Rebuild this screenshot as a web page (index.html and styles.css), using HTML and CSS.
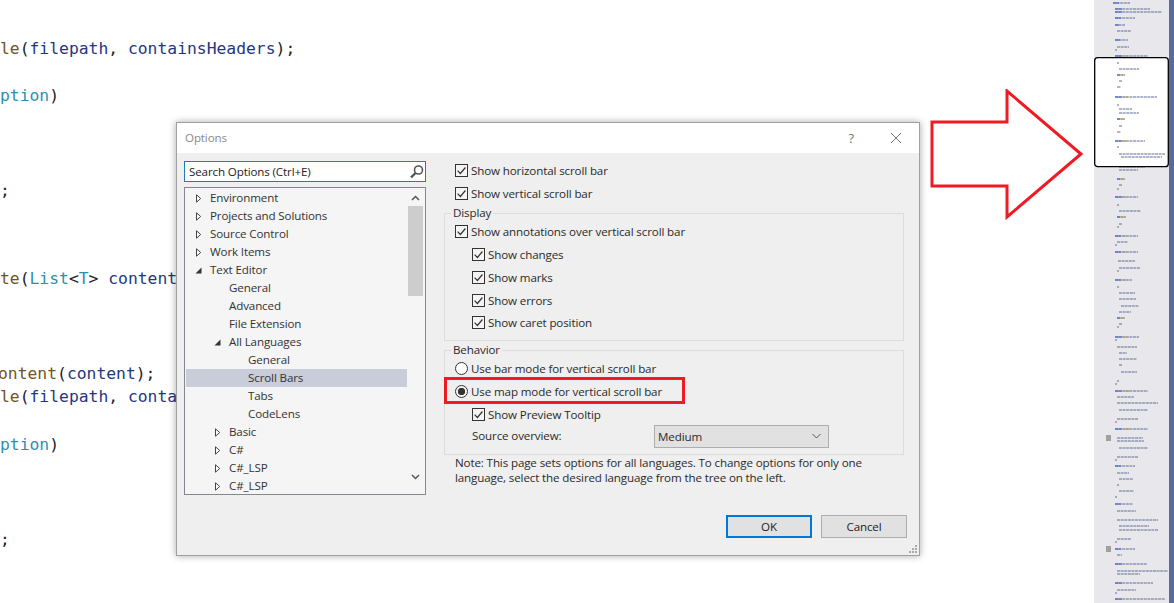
FILE: index.html
```html
<!DOCTYPE html>
<html lang="en">
<head>
<meta charset="utf-8">
<title>Options</title>
<link rel="stylesheet" href="styles.css">
</head>
<body>
<svg class="defs" width="0" height="0" aria-hidden="true">
  <symbol id="chk" viewBox="0 0 13 13"><rect x=".5" y=".5" width="12" height="12" fill="#f4f4f4" stroke="#333"/><path d="M2.6 6.6l2.8 2.9 5-6" fill="none" stroke="#333" stroke-width="1.2"/></symbol>
  <symbol id="tri" viewBox="0 0 7 9"><path d="M1.5 .8L5.7 4.5 1.5 8.2z" fill="#fff" stroke="#444"/></symbol>
  <symbol id="open" viewBox="0 0 7 7"><path d="M6.5 .5V6.5H.5z" fill="#333"/></symbol>
</svg>
<div class="page">
  <main class="code">
    <div class="ln c1"><span class="m">le</span>(<span class="v">filepath</span>, <span class="v">containsHeaders</span>);</div>
    <div class="ln c2"><span class="t">ption</span>)</div>
    <div class="ln c3">;</div>
    <div class="ln c4"><span class="m">te</span>(<span class="t">List</span>&lt;<span class="t">T</span>&gt; <span class="v">content</span></div>
    <div class="ln c5"><span class="m">ontent</span>(<span class="v">content</span>);</div>
    <div class="ln c6"><span class="m">le</span>(<span class="v">filepath</span>, <span class="v">contains</span></div>
    <div class="ln c7"><span class="t">ption</span>)</div>
    <div class="ln c8">;</div>
  </main>
  <aside class="minimap">
    <svg class="map" width="75" height="603" viewBox="0 0 75 603" aria-hidden="true">
      <rect x="1" y="58" width="73" height="108" rx="3" fill="#fff"/>
      <path class="rows" d="M19 3h17M21 9h35M21 12h47M21 18h20M21 25h10M23 31h14M21 40h13M23 47h12M21 50h2M21 56h33M23 63h2M25 69h20M23 75h8M25 81h3M23 87h4M21 97h42M23 105h2M25 109h13M25 113h20M23 119h8M25 126h3M23 132h4M21 141h30M23 147h2M25 154h46M27 157h41M25 167h26M25 170h19M23 179h8M25 185h3M23 189h2M21 197h23M23 205h2M25 211h22M23 217h9M25 224h3M23 227h2M21 236h23M23 242h11M21 245h2M21 252h23M24 261h17M25 268h21M23 271h2M21 280h17M23 287h2M25 293h16M25 299h17M27 306h18M25 312h12M23 318h8M25 324h3M23 327h2M21 337h24M21 340h2M23 347h20M25 353h8M25 359h18M25 365h3M27 372h16M23 381h2M21 384h2M21 391h33M23 397h17M23 403h41M25 410h29M23 419h21M21 422h2M21 429h33M23 438h26M23 441h27M25 448h29M23 457h21M21 460h2M21 466h20M23 473h12M25 479h14M23 485h2M25 491h15M21 497h2M21 504h18M23 511h19M23 520h41M25 526h30M25 530h39M23 539h14M21 542h2M21 549h20M23 555h5M21 564h32M23 571h51M23 574h23M21 583h38M23 590h19M21 593h2M21 599h50"/>
      <path class="kw" d="M19 3h6M21 9h7M21 12h7M21 18h6M21 25h4M21 40h5M21 56h7M21 97h7M21 141h7M21 197h7M21 236h6M21 252h6M21 280h6M21 337h7M21 391h7M21 429h7M21 466h6M21 504h6M21 549h6M21 564h7M21 583h7M21 599h7M23 75h3M23 119h3M23 179h3M23 217h3M23 318h3"/>
      <path class="pk" d="M29 56h5M29 97h5M28 141h5M28 197h4M28 236h4M28 252h4M28 280h4M28 337h5M30 391h6M30 429h6M26 75h5M26 119h5M26 179h5M26 217h5M26 318h5"/>
      <rect x=".7" y="57.7" width="73.6" height="109" rx="3" fill="none" stroke="#000" stroke-width="1.3"/>
      <rect x="12" y="435" width="5" height="6" fill="#a0a0a0"/>
      <rect x="12" y="546" width="5" height="6" fill="#a0a0a0"/>
    </svg>
    <div class="strip"></div>
  </aside>
</div>

<svg class="arrow" width="156" height="132" viewBox="0 0 156 132" aria-hidden="true">
  <path d="M2 33H77V2L151 65 77 128V97H2z" fill="#fff" stroke="#ed1c24" stroke-width="3"/>
</svg>

<section class="dialog">
  <header class="titlebar">
    <span class="title">Options</span>
    <span class="help">?</span>
    <svg class="close" width="12" height="12" viewBox="0 0 12 12" aria-hidden="true"><path d="M1 1l10 10M11 1L1 11" stroke="#777" fill="none"/></svg>
  </header>
  <div class="content">
    <div class="left">
      <div class="search">
        <span>Search Options (Ctrl+E)</span>
        <svg width="16" height="16" viewBox="0 0 16 16" aria-hidden="true"><circle cx="9.5" cy="6" r="4" fill="none" stroke="#555" stroke-width="1.6"/><path d="M6.5 9L2 13.5" stroke="#555" stroke-width="2.4"/></svg>
      </div>
      <div class="tree">
        <ul class="items">
          <li class="row t0"><svg class="tw"><use href="#tri"/></svg>Environment</li>
          <li class="row t0"><svg class="tw"><use href="#tri"/></svg>Projects and Solutions</li>
          <li class="row t0"><svg class="tw"><use href="#tri"/></svg>Source Control</li>
          <li class="row t0"><svg class="tw"><use href="#tri"/></svg>Work Items</li>
          <li class="row t0"><svg class="tw"><use href="#open"/></svg>Text Editor</li>
          <li class="row t1">General</li>
          <li class="row t1">Advanced</li>
          <li class="row t1">File Extension</li>
          <li class="row t1x"><svg class="tw"><use href="#open"/></svg>All Languages</li>
          <li class="row t2">General</li>
          <li class="row t2 sel">Scroll Bars</li>
          <li class="row t2">Tabs</li>
          <li class="row t2">CodeLens</li>
          <li class="row t1x"><svg class="tw"><use href="#tri"/></svg>Basic</li>
          <li class="row t1x"><svg class="tw"><use href="#tri"/></svg>C#</li>
          <li class="row t1x"><svg class="tw"><use href="#tri"/></svg>C#_LSP</li>
          <li class="row t1x"><svg class="tw"><use href="#tri"/></svg>C#_LSP</li>
        </ul>
        <div class="sbar">
          <svg class="sarrow" width="9" height="6" viewBox="0 0 9 6" aria-hidden="true"><path d="M1 5l3.5-3.5L8 5" fill="none" stroke="#555" stroke-width="1.5"/></svg>
          <div class="thumb"></div>
          <svg class="sarrow down" width="9" height="6" viewBox="0 0 9 6" aria-hidden="true"><path d="M1 1l3.5 3.5L8 1" fill="none" stroke="#555" stroke-width="1.5"/></svg>
        </div>
      </div>
    </div>
    <div class="right">
      <div class="opt plain"><svg class="box"><use href="#chk"/></svg>Show horizontal scroll bar</div>
      <div class="opt plain"><svg class="box"><use href="#chk"/></svg>Show vertical scroll bar</div>
      <div class="group display">
        <div class="legend">Display</div>
        <div class="opt"><svg class="box"><use href="#chk"/></svg>Show annotations over vertical scroll bar</div>
        <div class="opt sub"><svg class="box"><use href="#chk"/></svg>Show changes</div>
        <div class="opt sub"><svg class="box"><use href="#chk"/></svg>Show marks</div>
        <div class="opt sub"><svg class="box"><use href="#chk"/></svg>Show errors</div>
        <div class="opt sub"><svg class="box"><use href="#chk"/></svg>Show caret position</div>
      </div>
      <div class="group behavior">
        <div class="legend">Behavior</div>
        <div class="opt"><span class="radio"></span>Use bar mode for vertical scroll bar</div>
        <div class="opt"><span class="radio on"></span>Use map mode for vertical scroll bar</div>
        <div class="highlight"></div>
        <div class="opt sub"><svg class="box"><use href="#chk"/></svg>Show Preview Tooltip</div>
        <div class="source">
          <span class="srclabel">Source overview:</span>
          <div class="select">Medium
            <svg width="9" height="6" viewBox="0 0 9 6" aria-hidden="true"><path d="M.5 1L4.5 5 8.500 1" fill="none" stroke="#555" stroke-width="1"/></svg>
          </div>
        </div>
      </div>
      <p class="note">Note: This page sets options for all languages. To change options for only one<br>language, select the desired language from the tree on the left.</p>
      <div class="buttons">
        <div class="btn default">OK</div>
        <div class="btn">Cancel</div>
      </div>
    </div>
  </div>
  <svg class="grip" width="10" height="10" viewBox="0 0 10 10" aria-hidden="true"><path d="M7 1h2v2H7zM4 4h2v2H4zM7 4h2v2H7zM1 7h2v2H1zM4 7h2v2H4zM7 7h2v2H7z" fill="#a9a9a9"/></svg>
</section>
</body>
</html>
```
FILE: styles.css
```css
* { box-sizing: border-box; }
html, body { margin: 0; padding: 0; height: 100%; overflow: hidden; background: #fff; }
body { font-family: "Open Sans", "Noto Sans", sans-serif; font-size: 11.6px; letter-spacing: -0.13px; color: #2a2a2a; position: relative; }
.defs { position: absolute; }
.page { display: flex; height: 603px; }

.code { flex: 1; font-family: "DejaVu Sans Mono", monospace; font-size: 16.35px; letter-spacing: 0; line-height: 23px; color: #222; overflow: hidden; }
.ln { height: 23px; white-space: pre; }
.c1 { margin-top: 37px; }
.c2 { margin-top: 24px; }
.c3 { margin-top: 72px; }
.c4 { margin-top: 65px; }
.c5 { margin: 72px 0 0 -2px; }
.c6 { margin: 0; }
.c7 { margin-top: 25px; }
.c8 { margin-top: 72px; }
.m { color: #74531f; }
.v { color: #1f377f; }
.t { color: #2b91af; }

.minimap { width: 89px; display: flex; padding-left: 9px; flex: none; }
.map { width: 75px; height: 603px; background: #e8e8ec; flex: none; }
.rows { fill: none; stroke: #5d6a94; stroke-width: 1.6; stroke-dasharray: 3 .6; opacity: .65; filter: blur(.6px); }
.kw { fill: none; stroke: #2f55d4; stroke-width: 1.5; opacity: .6; filter: blur(.6px); }
.pk { fill: none; stroke: #b0a050; stroke-width: 1.5; opacity: .6; filter: blur(.6px); }
.strip { width: 5px; background: #5a6a9c; flex: none; }

.arrow { position: absolute; left: 930px; top: 89px; }

.dialog { position: absolute; left: 176px; top: 122px; width: 744px; height: 434px; background: #efefef; border: 1px solid #a0a0a0; box-shadow: 0 0 7px rgba(0,0,0,.35); display: flex; flex-direction: column; }
.titlebar { height: 30px; flex: none; background: #fff; display: flex; align-items: center; padding: 0 17px 1px 8px; }
.title { color: #8a8a8a; flex: 1; }
.help { color: #777; margin-right: 36px; font-size: 13px; }
.close { display: block; }
.content { display: flex; flex: 1; padding: 8px 0 0 7px; }

.left { width: 242px; flex: none; margin-right: 18px; }
.search { height: 21px; background: #fff; border: 1px solid #1f80b0; display: flex; align-items: center; justify-content: space-between; padding: 0 0 0 4px; color: #222; }
.search svg { flex: none; }
.tree { margin-top: 5px; height: 308px; border: 1px solid #828790; background: #f5f5f5; display: flex; padding: 1px 1px 0 1px; overflow: hidden; }
.items { list-style: none; margin: 0; padding: 0; width: 221px; flex: none; }
.row { height: 18px; flex: none; line-height: 18px; white-space: nowrap; color: #333; display: flex; align-items: center; }
.t0 { padding-left: 9px; }
.t1 { padding-left: 43px; }
.t1x { padding-left: 28px; }
.t2 { padding-left: 62px; }
.sel { background: #c9ccd9; }
.tw { width: 7px; height: 9px; margin-right: 8px; flex: none; }
.sbar { width: 16px; flex: none; display: flex; flex-direction: column; align-items: center; }
.sarrow { margin-top: 6px; flex: none; }
.thumb { width: 15px; height: 90px; background: #cdcdcd; margin-top: 5px; }
.down { margin-top: 178px; }

.right { width: 463px; flex: none; display: flex; flex-direction: column; margin-top: -1px; }
.opt { height: 22.75px; display: flex; align-items: center; white-space: nowrap; padding: 0 0 1px 11px; color: #2a2a2a; }
.opt.plain { height: 22.5px; }
.group .opt { padding-left: 10px; }
.group .opt.sub { padding-left: 27px; }
.box { width: 13px; height: 13px; margin-right: 3px; flex: none; }
.group { width: 460px; border: 1px solid #dcdcdc; position: relative; }
.display { margin-top: 8px; height: 128px; }
.behavior { margin-top: 9px; height: 105px; }
.legend { width: fit-content; height: 16px; line-height: 16px; margin: -9px 0 0 6px; padding: 0 2px; background: #efefef; color: #2a2a2a; }
.radio { width: 13px; height: 13px; border: 1px solid #333; border-radius: 50%; background: #fff; margin-right: 3px; flex: none; display: block; }
.radio.on { background: radial-gradient(circle, #333 0 3.4px, #f4f4f4 4px); }
.highlight { position: absolute; left: -1px; top: 26px; width: 241px; height: 27px; border: 3px solid #ed1c24; }
.source { display: flex; align-items: center; height: 23px; padding-left: 27px; margin-top: -1px; }
.srclabel { width: 182px; margin-top: -3px; }
.select { width: 175px; height: 23px; background: #e1e1e1; border: 1px solid #adadad; display: flex; align-items: center; justify-content: space-between; padding: 0 7px 1px 3px; color: #2a2a2a; }
.note { margin: 0 0 0 11px; line-height: 15px; color: #2a2a2a; }
.buttons { display: flex; justify-content: flex-end; gap: 9px; margin-top: 30px; }
.btn { width: 86px; height: 23px; background: #e1e1e1; border: 1px solid #adadad; display: flex; align-items: center; justify-content: center; color: #222; }
.default { border: 2px solid #0078d7; }
.grip { position: absolute; right: 1px; bottom: 1px; }
```
